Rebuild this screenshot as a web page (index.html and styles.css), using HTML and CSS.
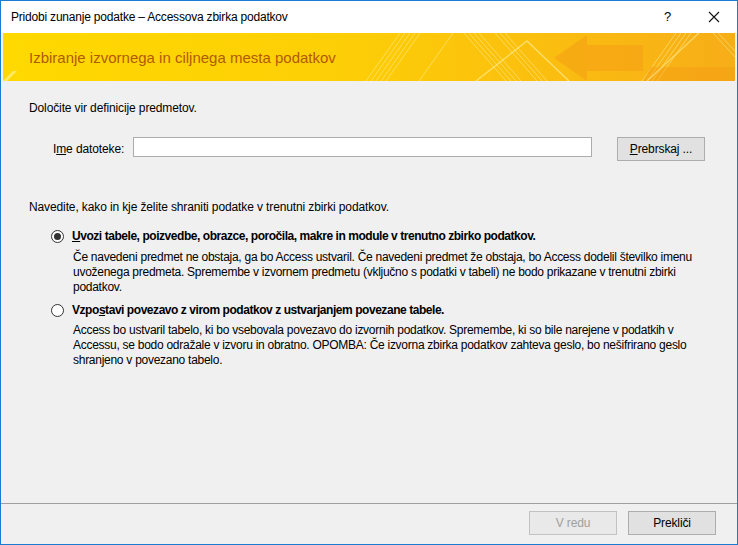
FILE: index.html
```html
<!DOCTYPE html>
<html lang="sl">
<head>
  <meta charset="UTF-8" />
  <title>Pridobi zunanje podatke – Accessova zbirka podatkov</title>
  <link rel="stylesheet" href="styles.css">
</head>
<body>
  <div class="window">
    <div class="titlebar">
      <span class="title">Pridobi zunanje podatke – Accessova zbirka podatkov</span>
      <span class="help">?</span>
      <svg class="close" width="12" height="12" viewBox="0 0 12 12">
        <path d="M1 1 L11 11 M11 1 L1 11" stroke="#111" stroke-width="1.1" fill="none"/>
      </svg>
    </div>

    <!-- rumeni pas z naslovom -->
    <div class="banner">
      <svg class="banner-art" width="732" height="48" viewBox="0 0 732 48" preserveAspectRatio="none">
        <defs>
          <linearGradient id="bg" x1="0" x2="1" y1="0" y2="0">
            <stop offset="0" stop-color="#ffd900"/>
            <stop offset="0.45" stop-color="#fdcf06"/>
            <stop offset="0.7" stop-color="#fbc10e"/>
            <stop offset="1" stop-color="#f7ad18"/>
          </linearGradient>
        </defs>
        <rect width="732" height="48" fill="url(#bg)"/>
        <polygon points="0,48 10,38 14,38 4,48" fill="#fff6a8" opacity="0.6"/>
        <g stroke="#fff2a0" stroke-width="1" opacity="0.5">
          <line x1="363" y1="48" x2="397" y2="0"/>
          <line x1="368" y1="48" x2="402" y2="0"/>
          <line x1="373" y1="48" x2="407" y2="0"/>
          <line x1="378" y1="48" x2="412" y2="0"/>
          <line x1="383" y1="48" x2="417" y2="0"/>
          <line x1="416" y1="48" x2="450" y2="0"/>
          <line x1="461" y1="0" x2="503" y2="48"/>
          <line x1="466" y1="0" x2="508" y2="48"/>
          <line x1="471" y1="0" x2="513" y2="48"/>
          <line x1="476" y1="0" x2="518" y2="48"/>
          <line x1="492" y1="0" x2="534" y2="48"/>
          <line x1="497" y1="0" x2="539" y2="48"/>
          <line x1="502" y1="0" x2="544" y2="48"/>
          <line x1="639" y1="48" x2="673" y2="0"/>
          <line x1="644" y1="48" x2="678" y2="0"/>
          <line x1="649" y1="48" x2="683" y2="0"/>
          <line x1="654" y1="48" x2="688" y2="0"/>
          <line x1="710" y1="0" x2="732" y2="24"/>
          <line x1="715" y1="0" x2="732" y2="18"/>
        </g>
        <polyline points="473,48 524,8 566,48" fill="none" stroke="#ffeb8a" stroke-width="1.5" opacity="0.7"/>
        <polygon points="551,25 584,2 584,12 640,12 640,38 584,38 584,48" fill="#f5a016" opacity="0.6"/>
        <polygon points="648,34 732,34 732,48 640,48" fill="#f49c14" opacity="0.45"/>
        <line x1="644" y1="48" x2="696" y2="0" stroke="#ffe27a" stroke-width="1.5" opacity="0.7"/>
      </svg>
      <h1>Izbiranje izvornega in ciljnega mesta podatkov</h1>
    </div>

    <div class="content">
      <p class="intro">Določite vir definicije predmetov.</p>
      <div class="file-row">
        <label for="fileName">I<u>m</u>e datoteke:</label>
        <input id="fileName" type="text">
        <button class="btn browse"><u>P</u>rebrskaj ...</button>
      </div>

      <p class="intro store">Navedite, kako in kje želite shraniti podatke v trenutni zbirki podatkov.</p>

      <div class="option">
        <span class="radio checked"></span>
        <div class="option-text">
          <div class="option-title"><u>U</u>vozi tabele, poizvedbe, obrazce, poročila, makre in module v trenutno zbirko podatkov.</div>
          <div class="option-desc">Če navedeni predmet ne obstaja, ga bo Access ustvaril. Če navedeni predmet že obstaja, bo Access dodelil številko imenu<br>uvoženega predmeta. Spremembe v izvornem predmetu (vključno s podatki v tabeli) ne bodo prikazane v trenutni zbirki<br>podatkov.</div>
        </div>
      </div>

      <div class="option">
        <span class="radio"></span>
        <div class="option-text">
          <div class="option-title">Vzpo<u>s</u>tavi povezavo z virom podatkov z ustvarjanjem povezane tabele.</div>
          <div class="option-desc">Access bo ustvaril tabelo, ki bo vsebovala povezavo do izvornih podatkov. Spremembe, ki so bile narejene v podatkih v<br>Accessu, se bodo odražale v izvoru in obratno. OPOMBA: Če izvorna zbirka podatkov zahteva geslo, bo nešifrirano geslo<br>shranjeno v povezano tabelo.</div>
        </div>
      </div>
    </div>

    <div class="footer">
      <button class="btn" disabled>V redu</button>
      <button class="btn">Prekliči</button>
    </div>
  </div>
</body>
</html>
```

FILE: styles.css
```css
* { box-sizing: border-box; }
body {
  margin: 0;
  font-family: "Liberation Sans", Arial, sans-serif;
  font-size: 12px;
  letter-spacing: -0.12px;
  color: #000;
  background: #fff;
}
.window {
  width: 738px;
  height: 545px;
  border: 1px solid #1a7bd0;
  background: #f0f0f0;
  display: flex;
  flex-direction: column;
}
.titlebar {
  height: 32px;
  background: #fff;
  display: flex;
  align-items: center;
  padding: 0 0 1px 10px;
}
.title { flex: 1; font-size: 12px; letter-spacing: -0.2px; }
.help { font-size: 13px; margin-right: 37px; }
.close { margin-right: 17px; }

.banner {
  position: relative;
  height: 48px;
  margin: 0 1px 0 2px;
  display: flex;
  align-items: center;
}
.banner-art { position: absolute; left: 0; top: 0; }
.banner h1 {
  position: relative;
  margin: 0 0 0 26px;
  font-size: 15px;
  font-weight: normal;
  letter-spacing: 0;
  color: #b25a00;
}

.content {
  flex: 1;
  padding: 20px 28px 0 28px;
}
.intro { margin: 0; line-height: 15px; }
.file-row {
  display: flex;
  align-items: center;
  margin: 21px 0 0 24px;
}
.file-row label { width: 80px; }
.file-row input {
  width: 459px;
  height: 20px;
  border: 1px solid #acacac;
  background: #fff;
  margin: -4px 0 0 0;
}
.btn {
  width: 88px;
  height: 24px;
  font-family: inherit;
  font-size: 12px;
  letter-spacing: -0.12px;
  color: #000;
  background: #e1e1e1;
  border: 1px solid #adadad;
  padding: 0;
}
.btn:disabled {
  color: #a0a0a0;
  background: #e9e9e9;
  border-color: #c2c2c2;
}
.browse { margin-left: 25px; }
.store { margin-top: 39px; }

.option {
  display: flex;
  margin: 14px 0 0 22px;
}
.option + .option { margin-top: 8px; }
.radio {
  width: 13px;
  height: 13px;
  border: 1px solid #333;
  border-radius: 50%;
  background: #fff;
  margin: 1px 8px 0 0;
  flex: none;
  display: flex;
  align-items: center;
  justify-content: center;
}
.radio.checked::after {
  content: "";
  width: 7px;
  height: 7px;
  border-radius: 50%;
  background: #333;
}
.option-title {
  font-weight: bold;
  line-height: 15px;
  letter-spacing: -0.45px;
  white-space: nowrap;
}
.option-desc {
  margin: 6px 0 0 1px;
  line-height: 15px;
  letter-spacing: -0.27px;
  white-space: nowrap;
}
.option + .option .option-desc { margin-top: 5px; }

.footer {
  height: 41px;
  border-top: 1px solid #a0a0a0;
  display: flex;
  justify-content: flex-end;
  gap: 11px;
  padding: 7px 21px 0 0;
}
```
